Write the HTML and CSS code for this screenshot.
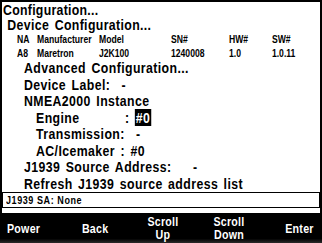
FILE: index.html
```html
<!DOCTYPE html>
<html lang="en">
<head>
    <meta charset="UTF-8">
    <title>Configuration</title>
    <link rel="stylesheet" href="styles.css">
</head>
<body>
    <div class="screen">
        <div class="menu">
            <div class="line title">Configuration...</div>
            <div class="line sub">Device Configuration...</div>
            <div class="device-table">
                <span>NA</span><span>Manufacturer</span><span>Model</span><span>SN#</span><span>HW#</span><span>SW#</span>
                <span>A8</span><span>Maretron</span><span>J2K100</span><span>1240008</span><span>1.0</span><span>1.0.11</span>
            </div>
            <div class="line lvl2">Advanced Configuration...</div>
            <div class="line lvl2">Device Label: <span class="dash">-</span></div>
            <div class="line lvl2">NMEA2000 Instance</div>
            <div class="line lvl3"><span class="label">Engine</span>: <span class="selected">#0</span></div>
            <div class="line lvl3">Transmission: <span class="dash">-</span></div>
            <div class="line lvl3">AC/Icemaker : #0</div>
            <div class="line lvl2">J1939 Source Address: <span class="dash wide">-</span></div>
            <div class="line lvl2">Refresh J1939 source address list</div>
        </div>
        <div class="status"><span class="narrow">J1939 SA: None</span></div>
        <div class="keys">
            <div class="key first"><span class="narrow">Power</span></div>
            <div class="key"><span class="narrow">Back</span></div>
            <div class="key"><span class="narrow">Scroll<br>Up</span></div>
            <div class="key"><span class="narrow">Scroll<br>Down</span></div>
            <div class="key last"><span class="narrow">Enter</span></div>
        </div>
    </div>
</body>
</html>
```

FILE: styles.css
```css
html, body {
    margin: 0;
    padding: 0;
    background: #000;
    overflow: hidden;
}
.screen {
    width: 322px;
    height: 243px;
    box-sizing: border-box;
    border: 2px solid #000;
    border-bottom: none;
    background: #fff;
    font-family: "Liberation Sans", Arial, sans-serif;
    font-weight: bold;
    color: #000;
    display: flex;
    flex-direction: column;
}
/* no narrow font installed, so squeeze Arial-like glyphs to ~82% */
.menu {
    width: 388px;
    height: 190px;
    flex: none;
    overflow: hidden;
    transform: scaleX(0.82);
    transform-origin: 0 0;
}
.narrow {
    display: inline-block;
    transform: scaleX(0.82);
}
.line {
    font-size: 15px;
    line-height: 16.5px;
    height: 16.5px;
    white-space: nowrap;
    letter-spacing: 0.5px;
    word-spacing: 2px;
}
.title {
    padding-left: 1.2px;
    height: 15px;
    line-height: 15px;
    letter-spacing: 0.35px;
    word-spacing: 0;
}
.sub {
    padding-left: 6.5px;
    height: 15px;
    line-height: 15px;
    letter-spacing: 0.45px;
}
.lvl2 {
    padding-left: 26.8px;
}
.lvl3 {
    padding-left: 41.5px;
}
.label {
    display: inline-block;
    width: 108.5px;
}
.dash {
    padding-left: 7px;
}
.dash.wide {
    padding-left: 19.5px;
}
.selected {
    background: #000;
    color: #fff;
    padding: 0 1px;
}
.device-table {
    display: grid;
    grid-template-columns: 24.4px 75.6px 87.8px 70.7px 52.4px auto;
    grid-auto-rows: 13.5px;
    padding: 1px 0 0 18.3px;
    height: 28px;
    box-sizing: border-box;
    font-size: 10.5px;
    line-height: 13.5px;
}
.status {
    height: 16px;
    flex: none;
    box-sizing: border-box;
    border: 1px solid #000;
    padding-left: 3px;
    font-size: 11px;
    line-height: 14px;
    letter-spacing: 0.7px;
}
.status .narrow {
    transform-origin: 0 50%;
}
.keys {
    flex: 1;
    margin: 5px -2px 0 -2px;
    background: linear-gradient(#000 85%, #2a2a2a);
    color: #fff;
    display: grid;
    grid-template-columns: 62px 67px 68px 64px 61px;
    align-items: center;
    font-size: 13px;
    line-height: 13px;
    letter-spacing: 0.3px;
}
.key {
    text-align: center;
}
.first {
    text-align: left;
    padding-left: 7px;
}
.first .narrow {
    transform-origin: 0 50%;
}
.last {
    text-align: right;
    padding-right: 8px;
}
.last .narrow {
    transform-origin: 100% 50%;
}
```
